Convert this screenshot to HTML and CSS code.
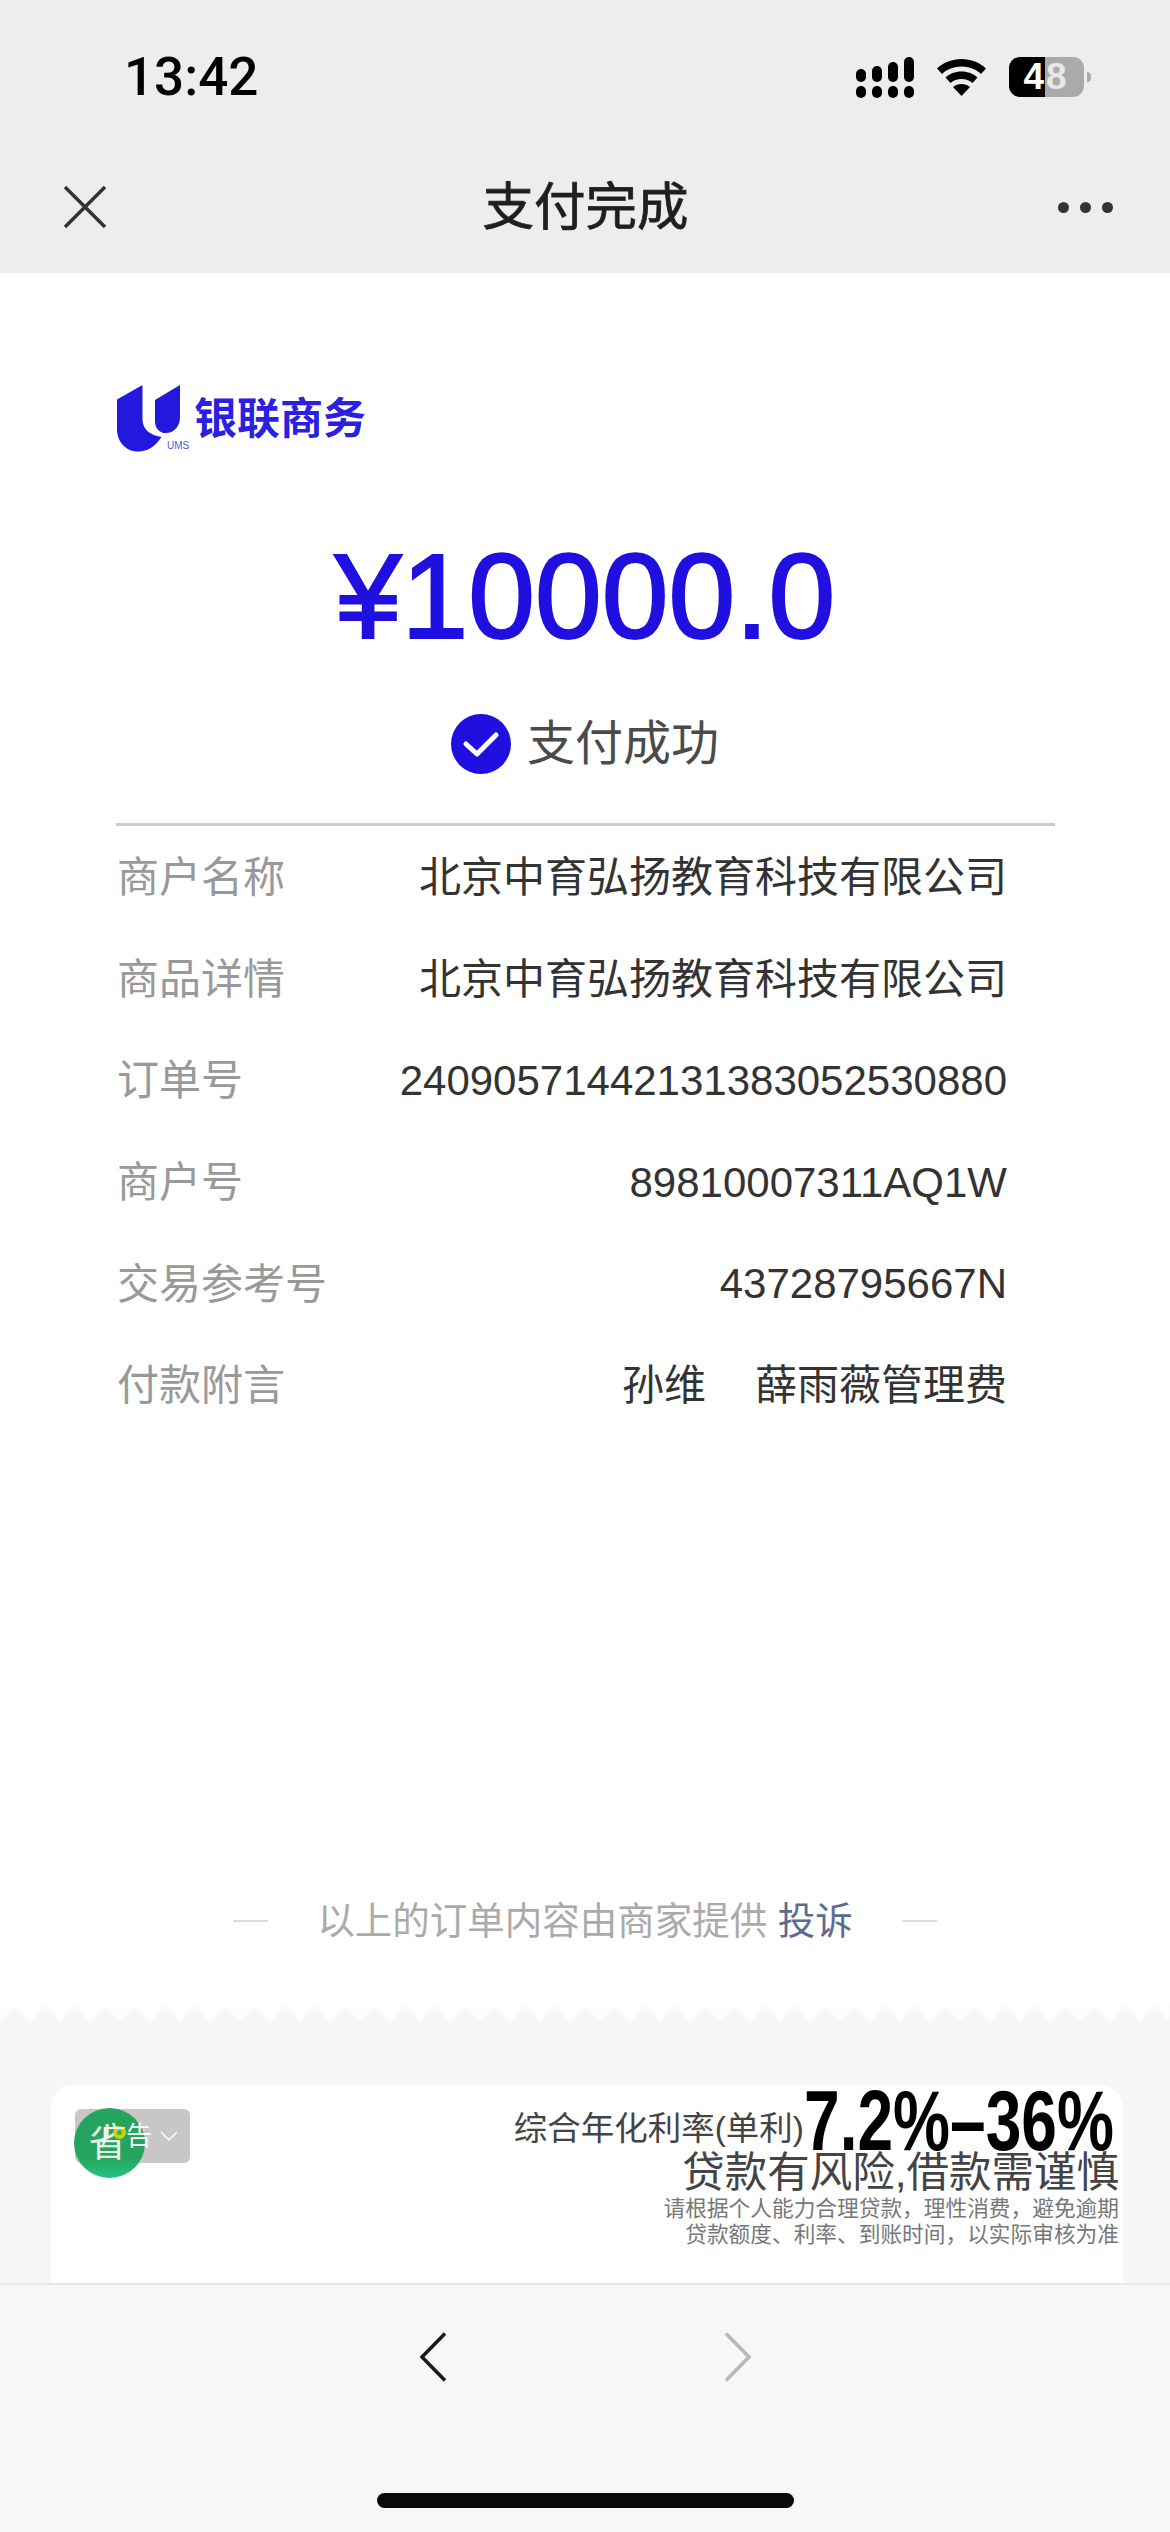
FILE: index.html
```html
<!DOCTYPE html>
<html lang="zh-CN">
<head>
<meta charset="utf-8">
<title>支付完成</title>
<link rel="stylesheet" href="styles.css">
</head>
<body>
<div class="page">
  <header class="top">
    <div class="status">
      <span class="time">13:42</span>
      <div class="status-icons">
        <svg class="signal" width="58" height="41" viewBox="0 0 58 41"><g fill="#000"><rect x="0" y="12" width="10" height="13" rx="5"/><rect x="16" y="9" width="10" height="16" rx="5"/><rect x="32" y="5" width="10" height="20" rx="5"/><rect x="48" y="0" width="10" height="25" rx="5"/><rect x="0" y="29" width="10" height="12" rx="5"/><rect x="16" y="29" width="10" height="12" rx="5"/><rect x="32" y="29" width="10" height="12" rx="5"/><rect x="48" y="29" width="10" height="12" rx="5"/></g></svg>
        <svg class="wifi" width="49" height="37" viewBox="0 0 49 37"><path d="M24.5 0C15 0 6.500 3.500 0 9.500l5 5.500C10 10.300 17 7.500 24.500 7.500S39 10.300 44 15l5-5.500C42.500 3.500 34 0 24.500 0Z"/><path d="M24.500 12.500c-6.500 0-12 2.300-16 6l5 5.500c3-2.600 6.800-4.100 11-4.100s8 1.500 11 4.100l5-5.500c-4-3.700-9.500-6-16-6Z"/><path d="M24.500 25c-3.300 0-6.200 1.100-8.500 3l8.500 9 8.500-9c-2.300-1.900-5.200-3-8.500-3Z"/></svg>
        <div class="battery">
          <div class="battery-body"><span class="batt-a">4</span><span class="batt-b">8</span></div>
          <span class="battery-nub"></span>
        </div>
      </div>
    </div>
    <nav class="nav">
      <svg class="close" width="44" height="44" viewBox="0 0 44 44"><path d="M2 2 42 42M42 2 2 42" stroke="#333" stroke-width="3.500" fill="none"/></svg>
      <h1 class="title">支付完成</h1>
      <div class="more"><i></i><i></i><i></i></div>
    </nav>
  </header>

  <main class="main">
    <div class="logo">
      <svg class="logo-mark" width="63" height="67" viewBox="0 0 63 67"><path fill="#2318dd" d="M0 14.500 25.500 0V34C25.500 44 32 50 44.500 52 38 62 30 67 20 66.500 8 66 0 56 0 44Z"/><path fill="#2318dd" d="M38 15 63 0V32C63 42 56 49 47 48 41 47 38 42 38 36Z"/></svg>
      <span class="logo-ums">UMS</span>
      <span class="logo-text">银联商务</span>
    </div>
    <div class="amount">¥10000.0</div>
    <div class="result">
      <svg width="60" height="60" viewBox="0 0 60 60"><circle cx="30" cy="30" r="30" fill="#2010e0"/><path d="M15 30 26 40 45 21" fill="none" stroke="#fff" stroke-width="5" stroke-linecap="round" stroke-linejoin="round"/></svg>
      <span class="result-text">支付成功</span>
    </div>
    <div class="divider"></div>
    <dl class="rows">
      <div class="row"><dt>商户名称</dt><dd class="cjk">北京中育弘扬教育科技有限公司</dd></div>
      <div class="row"><dt>商品详情</dt><dd class="cjk">北京中育弘扬教育科技有限公司</dd></div>
      <div class="row"><dt>订单号</dt><dd class="num">24090571442131383052530880</dd></div>
      <div class="row"><dt>商户号</dt><dd class="num">89810007311AQ1W</dd></div>
      <div class="row"><dt>交易参考号</dt><dd class="num">43728795667N</dd></div>
      <div class="row"><dt>付款附言</dt><dd class="cjk">孙维　&#8198;薛雨薇管理费</dd></div>
    </dl>
    <div class="note">
      <span class="dash"></span>
      <span class="note-text">以上的订单内容由商家提供 <a class="complain">投诉</a></span>
      <span class="dash"></span>
    </div>
  </main>

  <section class="ad-area">
    <div class="zigzag"></div>
    <div class="card">
      <div class="badge">
        <span class="badge-text">广告</span>
        <svg width="18" height="10" viewBox="0 0 18 10"><path d="M1 1 9 9 17 1" fill="none" stroke="#fff" stroke-width="1.500"/></svg>
        <div class="save"><span class="save-text">省</span><span class="save-dot"></span></div>
      </div>
      <div class="ad-copy">
        <div class="ad-rate">
          <span class="ad-rate-label">综合年化利率(单利)</span>
          <span class="ad-rate-box"><span class="ad-rate-num">7.2%–36%</span></span>
        </div>
        <div class="ad-warn">贷款有风险,借款需谨慎</div>
        <div class="ad-small">请根据个人能力合理贷款，理性消费，避免逾期</div>
        <div class="ad-small">贷款额度、利率、到账时间，以实际审核为准</div>
      </div>
    </div>
  </section>

  <footer class="toolbar">
    <div class="toolbar-nav">
      <svg width="27" height="50" viewBox="0 0 27 50"><path d="M25 1.500 2 25 25 48.500" fill="none" stroke="#1a1a1a" stroke-width="3.500"/></svg>
      <svg width="27" height="50" viewBox="0 0 27 50"><path d="M2 1.500 25 25 2 48.500" fill="none" stroke="#b8b8b8" stroke-width="3.500"/></svg>
    </div>
    <div class="home"></div>
  </footer>
</div>
</body>
</html>
```
FILE: styles.css
```css
* { box-sizing: border-box; }
html, body { margin: 0; padding: 0; background: #fff; }
body { font-family: "Liberation Sans", "Noto Sans CJK SC", sans-serif; }
.page { width: 1170px; height: 2532px; overflow: hidden; display: flex; flex-direction: column; }

/* header */
.top { height: 273px; background: #ededed; flex: none; }
.status { height: 154px; display: flex; align-items: center; justify-content: space-between; padding: 0 79px 0 124px; }
.time { font-family: Roboto, "Liberation Sans", sans-serif; font-size: 53px; font-weight: 500; color: #000; line-height: 1; }
.status-icons { display: flex; align-items: center; }
.signal { margin-right: 23px; }
.wifi { margin-right: 23px; }
.battery { display: flex; align-items: center; }
.battery-body { width: 75px; height: 40px; border-radius: 11px; display: flex; overflow: hidden; font-weight: 700; font-size: 37px; line-height: 40px; }
.batt-a { width: 36px; background: #000; color: #fff; text-align: right; padding-right: 1px; }
.batt-b { flex: 1; background: #aaa; color: #e8e8e8; text-align: left; padding-left: 1px; }
.battery-nub { width: 4px; height: 10px; margin-left: 3px; background: #aaa; border-radius: 0 5px 5px 0; }
.nav { height: 119px; display: flex; align-items: center; justify-content: space-between; padding: 0 57px 13px 63px; }
.title { margin: 0 0 0 6px; font-size: 51.5px; font-weight: 400; color: #1f1f1f; line-height: 60px; -webkit-text-stroke: 0.8px #1f1f1f; }
.more { display: flex; gap: 11px; }
.more i { display: block; width: 11px; height: 11px; border-radius: 50%; background: #333; }

/* main */
.main { height: 1734px; flex: none; background: #fff; display: flex; flex-direction: column; }
.logo { position: relative; margin: 112px 0 0 117px; height: 67px; display: flex; align-items: center; }
.logo-mark { flex: none; }
.logo-text { margin: 0 0 0 14px; font-size: 43px; line-height: 50px; font-weight: 700; color: #2a20e0; }
.logo-ums { position: absolute; left: 50px; top: 55px; font-size: 10px; line-height: 12px; color: #5a55e0; }
.amount { margin-top: 84px; height: 123px; line-height: 120px; text-align: center; font-family: "Liberation Sans", sans-serif; font-size: 120px; color: #2010e0; -webkit-text-stroke: 2.2px #2010e0; }
.result { margin-top: 55px; height: 60px; display: flex; align-items: center; justify-content: center; gap: 16px; }
.result-text { font-size: 48px; line-height: 60px; color: #4a4a4a; }
.divider { margin: 49px 0 0 116px; width: 939px; height: 3px; background: #ccc; flex: none; }
.rows { margin: 0; padding: 0 163px 0 117px; }
.row { height: 101.6px; display: flex; align-items: center; justify-content: space-between; font-size: 42px; }
.row dt { color: #999; padding-bottom: 6px; }
.row dd { margin: 0; color: #333; }
.row .cjk { padding-bottom: 6px; }
.row .num { padding-top: 2px; }
.note { margin-top: 460px; height: 50px; display: flex; align-items: center; justify-content: center; }
.dash { width: 35px; height: 2px; background: #ddd; }
.note-text { margin: 0 49px; font-size: 37.5px; line-height: 50px; color: #aaa; white-space: nowrap; }
.complain { color: #5b6b94; }

/* ad */
.ad-area { height: 276px; flex: none; background: #f6f6f6; overflow: hidden; }
.zigzag { height: 15px; background: #fff conic-gradient(at 50% 0, #fff 135deg, #f6f6f6 135deg 225deg, #fff 225deg) 0 0 / 30px 15px; filter: blur(1.5px); }
.card { margin: 63px 47px 0 51px; height: 260px; background: #fff; border-radius: 22px 22px 0 0; display: flex; justify-content: space-between; padding: 0 4px 0 24px; }
.badge { position: relative; flex: none; margin-top: 24px; width: 115px; height: 54px; background: #c8c6c6; border-radius: 6px; display: flex; align-items: center; padding-left: 25px; gap: 8px; color: #fff; }
.badge-text { position: relative; z-index: 1; font-size: 26px; line-height: 54px; white-space: nowrap; }
.save { position: absolute; left: -1px; top: -1px; width: 71px; height: 70px; border-radius: 50%; background: linear-gradient(#25a45e 0 70%, #24c480); display: flex; justify-content: center; padding: 11px 4px 0 0; }
.save-text { font-size: 38px; line-height: 48px; color: #e9efe9; }
.save-dot { position: absolute; left: 39px; top: 18px; width: 13px; height: 13px; border-radius: 50%; border: 4px solid #c6d40a; background: #3fae5a; }
.ad-copy { display: flex; flex-direction: column; align-items: flex-end; color: #222; }
.ad-rate { display: flex; align-items: flex-end; height: 66px; }
.ad-rate-label { font-size: 33.5px; line-height: 40px; margin-bottom: 2px; white-space: nowrap; color: #444; }
.ad-rate-box { width: 315px; height: 66px; display: block; }
.ad-rate-num { display: block; white-space: nowrap; font-size: 86px; line-height: 70px; font-weight: 700; color: #000; transform: scaleX(0.745); transform-origin: 0 0; }
.ad-warn { font-size: 42.5px; line-height: 44px; white-space: nowrap; color: #444; }
.ad-small { position: relative; top: 1px; font-size: 21.7px; line-height: 26px; white-space: nowrap; color: #777; }

/* toolbar */
.toolbar { height: 249px; flex: none; background: #f7f7f7; border-top: 2px solid #e8e8e8; display: flex; flex-direction: column; align-items: center; padding-top: 47px; }
.toolbar-nav { display: flex; gap: 277px; height: 50px; }
.home { margin-top: 111px; width: 417px; height: 15px; border-radius: 8px; background: #0a0a0a; }
```
